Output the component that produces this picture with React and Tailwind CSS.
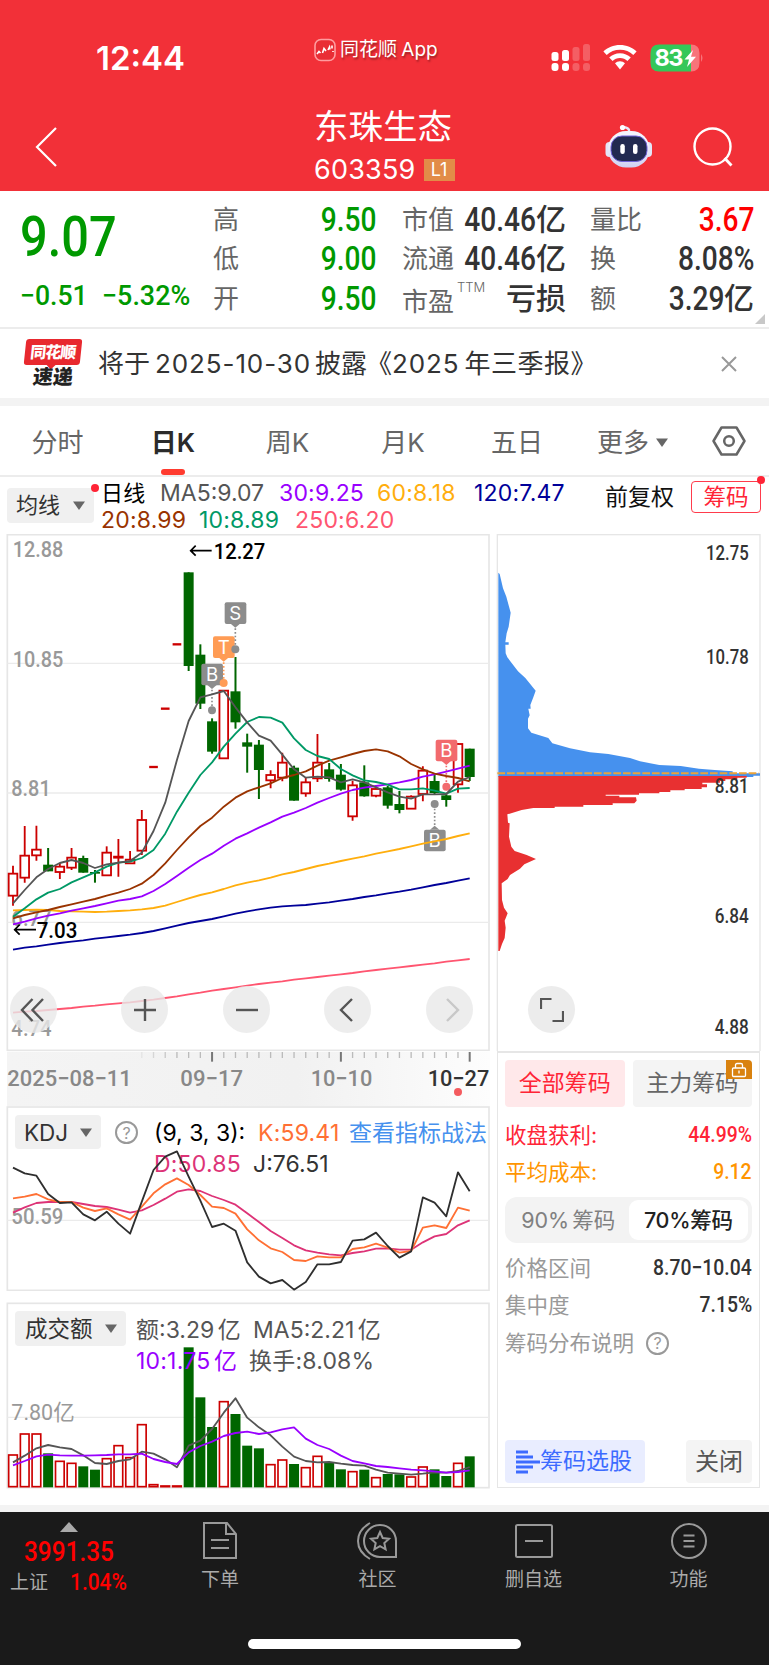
import React from 'react';
import clsx from 'clsx';

const NUM = "font-['Roboto','Noto_Sans_CJK_SC',sans-serif]";

// Candles: [up?, high, low, body top, body bottom] in chart units
const candles = [
  [1, 1007, 1127, 1031, 1097], [1, 888, 1058, 977, 1043], [1, 887, 992, 959, 976], [0, 954, 1024, 1004, 1024],
  [1, 1000, 1047, 1010, 1026], [1, 954, 1020, 983, 1013], [0, 977, 1028, 984, 1028], [0, 1020, 1058, 1026, 1031],
  [1, 949, 1036, 968, 1036], [1, 927, 1040, 980, 983], [1, 963, 1000, 989, 1000], [1, 840, 975, 870, 962],
  [1, 711, 711, 711, 711], [1, 536, 536, 536, 536], [1, 343, 343, 343, 343], [0, 127, 423, 127, 408],
  [0, 343, 537, 374, 521], [0, 565, 671, 574, 665], [1, 482, 685, 482, 685], [0, 381, 596, 484, 577],
  [0, 611, 728, 637, 650], [0, 630, 807, 644, 720], [1, 721, 775, 735, 751], [1, 668, 754, 698, 743],
  [0, 707, 812, 713, 812], [1, 743, 800, 757, 790], [1, 612, 756, 698, 745], [0, 699, 755, 718, 747],
  [0, 702, 782, 734, 779], [1, 752, 872, 766, 859], [0, 706, 800, 757, 799], [1, 766, 802, 777, 797],
  [0, 768, 836, 772, 827], [0, 783, 850, 822, 840], [1, 796, 836, 800, 836], [1, 709, 814, 722, 792],
  [0, 735, 795, 753, 789], [0, 790, 830, 796, 810], [1, 640, 788, 642, 763], [0, 656, 753, 656, 741],
];

const maLines = [
  { color: '#ff5570', data: [1448, 1445, 1443, 1440, 1437, 1434, 1430, 1427, 1423, 1420, 1417, 1413, 1409, 1404, 1399, 1393, 1388, 1382, 1377, 1372, 1367, 1362, 1358, 1354, 1349, 1345, 1341, 1337, 1333, 1329, 1324, 1320, 1316, 1312, 1308, 1304, 1300, 1295, 1291, 1287] },
  { color: '#000099', data: [1259, 1253, 1249, 1244, 1239, 1235, 1231, 1226, 1222, 1218, 1214, 1209, 1203, 1195, 1187, 1179, 1173, 1167, 1159, 1151, 1144, 1138, 1133, 1129, 1127, 1125, 1121, 1117, 1112, 1107, 1101, 1096, 1090, 1085, 1079, 1072, 1065, 1059, 1052, 1045] },
  { color: '#ffae0d', data: [1141, 1140, 1139, 1140, 1143, 1144, 1145, 1146, 1145, 1143, 1141, 1138, 1134, 1127, 1116, 1105, 1095, 1087, 1077, 1066, 1058, 1051, 1043, 1033, 1026, 1017, 1008, 1001, 993, 986, 979, 971, 964, 957, 949, 941, 934, 927, 918, 910] },
  { color: '#9900ff', data: [1183, 1175, 1165, 1157, 1150, 1142, 1135, 1128, 1120, 1112, 1107, 1099, 1083, 1062, 1038, 1013, 990, 971, 947, 926, 910, 893, 877, 860, 848, 834, 818, 804, 791, 780, 773, 768, 763, 757, 750, 740, 733, 725, 716, 707] },
  { color: '#993300', data: [1165, 1155, 1147, 1140, 1131, 1123, 1115, 1107, 1097, 1088, 1077, 1061, 1035, 1000, 960, 922, 888, 863, 830, 803, 784, 772, 760, 744, 735, 724, 707, 692, 682, 672, 663, 658, 664, 679, 702, 718, 731, 738, 744, 754] },
  { color: '#009966', data: [1160, 1135, 1108, 1088, 1077, 1057, 1042, 1027, 1010, 998, 995, 984, 960, 911, 845, 788, 735, 697, 650, 611, 576, 561, 563, 578, 625, 660, 678, 687, 717, 736, 751, 756, 764, 778, 778, 775, 782, 791, 776, 774] },
  { color: '#555555', data: [1120, 1080, 1042, 1017, 999, 990, 999, 1014, 1003, 998, 993, 968, 903, 818, 690, 573, 502, 493, 483, 532, 577, 617, 632, 674, 718, 743, 740, 742, 757, 748, 757, 772, 787, 800, 806, 793, 793, 792, 755, 741] },
];

const kdjLines = [
  { color: '#dd3377', data: [338, 322, 309, 306, 306, 306, 312, 318, 321, 329, 338, 331, 315, 296, 275, 268, 273, 288, 300, 314, 340, 366, 393, 414, 436, 451, 458, 463, 466, 459, 454, 446, 445, 449, 449, 427, 409, 402, 376, 361] },
  { color: '#ff7034', data: [295, 290, 282, 298, 306, 306, 323, 333, 325, 343, 359, 320, 280, 253, 235, 255, 285, 320, 324, 341, 388, 421, 445, 456, 480, 483, 469, 472, 472, 447, 442, 431, 443, 458, 453, 383, 376, 384, 323, 332] },
  { color: '#2f2f2f', data: [203, 220, 227, 282, 309, 307, 343, 361, 335, 371, 401, 305, 210, 170, 154, 230, 302, 381, 371, 392, 487, 530, 550, 540, 569, 546, 493, 493, 486, 422, 418, 398, 438, 473, 454, 292, 308, 349, 217, 274] },
];

const volumes = [463, 400, 400, 460, 482, 488, 499, 509, 474, 435, 471, 372, 552, 556, 556, 142, 292, 381, 303, 342, 437, 445, 492, 478, 492, 501, 467, 487, 508, 513, 509, 531, 522, 523, 529, 499, 508, 528, 488, 469];

const volumeLines = [
  { color: '#555555', data: [487, 467, 445, 435, 442, 447, 466, 489, 492, 483, 478, 455, 461, 478, 502, 437, 422, 387, 338, 295, 353, 382, 406, 440, 470, 483, 487, 486, 491, 495, 497, 509, 518, 521, 524, 521, 517, 518, 513, 501] },
  { color: '#9900ff', data: [496, 483, 469, 464, 466, 467, 467, 466, 465, 463, 463, 461, 477, 486, 492, 457, 438, 425, 408, 399, 395, 402, 397, 388, 382, 416, 435, 447, 467, 483, 490, 498, 501, 505, 509, 511, 514, 518, 516, 511] },
];

const xAt = (i) => 39 + i * 35.13;

function Line({ data, color }) {
  return <polyline points={data.map((y, i) => `${xAt(i)},${y}`).join(' ')} fill="none" stroke={color} strokeWidth="5.500" strokeLinejoin="round" />;
}

function AxisText({ x, y, w, size = 66, fill = '#999', weight = 500, children }) {
  return (
    <text x={x} y={y} textLength={w} lengthAdjust="spacingAndGlyphs" fontSize={size} fill={fill} fontWeight={weight} className={NUM}>
      {children}
    </text>
  );
}

function Flag({ x, y, dotY, color, label }) {
  const below = dotY > y;
  const edge = below ? y + 32 : y - 32;
  const dir = below ? 1 : -1;
  return (
    <g fill={color}>
      <rect x={x - 32} y={y - 32} width="65" height="65" rx="6" />
      <path d={`M${x - 14} ${edge}L${x} ${edge + dir * 12}L${x + 14} ${edge}Z`} />
      <path d={`M${x} ${edge + dir * 14}V${dotY}`} stroke={color} strokeWidth="5" strokeDasharray="5 6" />
      <circle cx={x} cy={dotY} r="12" />
      <text x={x} y={y + 20} textAnchor="middle" fontSize="56" fill="#fff" className="font-['Inter',sans-serif]">{label}</text>
    </g>
  );
}

function Caret({ className }) {
  return (
    <svg viewBox="0 0 12 9" className={clsx('w-3 h-[9px]', className)}>
      <path d="M0 0.5H12L6 9Z" fill="#666" />
    </svg>
  );
}

function Help() {
  return (
    <span className="flex size-[23px] shrink-0 items-center justify-center rounded-full border-2 border-[#999] text-[16px] leading-none text-[#999]">?</span>
  );
}

function StatusBar() {
  return (
    <div className="flex h-[88px] items-start text-white">
      <div className="ml-[96px] mt-[38px] w-[218px] text-[33px] font-semibold leading-10">12:44</div>
      <div className="mt-9 flex w-[237px] items-center">
        <svg viewBox="0 0 22 24" className="mr-1 h-6 w-[22px]">
          <rect x="1" y="1.5" width="20" height="21" rx="6" fill="#e92d35" stroke="#ff9c9f" strokeWidth="1.6" />
          <path d="M3 16L5 13.500L6.500 15M8.500 15L10 10.500L12 13M14 12L15.500 9L16 11.500M18 7.500V10.500M19 13V14" fill="none" stroke="#fff" strokeWidth="1.6" />
        </svg>
        <span className="text-[19px] leading-7 [text-shadow:1px_2px_2px_rgba(0,0,0,0.35)] [word-spacing:-1px]">同花顺 App</span>
      </div>
      <svg viewBox="0 0 40 28" className="mt-[43px] h-7 w-10">
        <g fill="#fff">
          <rect x="0.5" y="9" width="7" height="9" rx="2.5" />
          <rect x="11" y="7" width="7" height="11" rx="2.5" />
          <rect x="0.5" y="20" width="7" height="8" rx="3" />
          <rect x="11" y="20" width="7" height="8" rx="3" />
          <g opacity="0.22">
            <rect x="21.5" y="4" width="7" height="14" rx="2.5" />
            <rect x="32" y="1" width="7" height="17" rx="2.5" />
            <rect x="21.5" y="20" width="7" height="8" rx="3" />
            <rect x="32" y="20" width="7" height="8" rx="3" />
          </g>
        </g>
      </svg>
      <svg viewBox="0 0 34 25" className="ml-[12px] mt-[45px] h-[25px] w-[34px]">
        <path d="M17 0C10.500 0 4.600 2.500 0.400 6.500L3.700 10C7.200 6.700 11.900 4.800 17 4.800S26.800 6.700 30.300 10L33.600 6.500C29.400 2.500 23.500 0 17 0Z" fill="#fff" />
        <path d="M17 8.300C12.800 8.300 9 9.900 6.200 12.500L9.600 15.900C11.500 14.100 14.100 13 17 13S22.500 14.100 24.400 15.900L27.800 12.500C25 9.900 21.200 8.300 17 8.300Z" fill="#fff" />
        <path d="M17 16.300C15.100 16.300 13.300 17 12 18.300L17 24.500L22 18.300C20.700 17 18.900 16.300 17 16.300Z" fill="#fff" />
      </svg>
      <svg viewBox="0 0 54 28" className="ml-[13px] mt-[43.500px] h-7 w-[54px]">
        <path d="M9 0.500H41V27.500H9Q0.500 27.500 0.500 19V9Q0.500 0.500 9 0.500Z" fill="#34c759" />
        <path d="M41 0.500Q49.500 0.500 49.500 9V19Q49.500 27.500 41 27.500Z" fill="#f7747a" />
        <path d="M51 10Q54 14 51 18Z" fill="#f7747a" />
        <path d="M43 6L34.500 15.500H39L37 23L46 12.800H41Z" fill="#fff" />
        <text x="4.500" y="22" fontSize="23.500" fontWeight="700" fill="#fff" textLength="29" className="font-['Inter',sans-serif]">83</text>
      </svg>
    </div>
  );
}

function TitleBar() {
  return (
    <div className="flex h-[103px] items-start text-white">
      <svg viewBox="0 0 22 40" className="ml-[35px] mt-[39px] h-10 w-[22px]">
        <path d="M21 1L2 20L21 39" fill="none" stroke="#fff" strokeWidth="2.200" />
      </svg>
      <div className="ml-[257px] mt-[18px] w-[291px]">
        <div className="text-[34.500px] leading-[42px]">东珠生态</div>
        <div className="mt-[6px] flex items-center">
          <span className="text-[27px] leading-8 tracking-[0.2px]">603359</span>
          <span className="ml-[8px] flex h-[22px] w-[31px] items-center justify-center bg-[#e28c48] text-[18px] leading-none">L1</span>
        </div>
      </div>
      <svg viewBox="0 0 48 46" className="mt-[35px] h-[46px] w-12">
        <defs>
          <linearGradient id="shell" x1="0" y1="0" x2="0" y2="1">
            <stop offset="0.3" stopColor="#f3f4fd" />
            <stop offset="1" stopColor="#cfd0f2" />
          </linearGradient>
        </defs>
        <path d="M24 9V7Q23 4.500 18 4" fill="none" stroke="#e8e8f8" strokeWidth="2.400" />
        <circle cx="17.500" cy="4.500" r="2.600" fill="#fff" />
        <rect x="0.500" y="19" width="8" height="15" rx="4" fill="#e4e5f8" />
        <rect x="39" y="19" width="8" height="15" rx="4" fill="#e4e5f8" />
        <rect x="3" y="8" width="41.500" height="36.500" rx="18" fill="url(#shell)" />
        <rect x="6" y="13" width="36" height="25.500" rx="11" fill="#222a50" stroke="#6f62d8" strokeWidth="1" />
        <rect x="15.300" y="21" width="4.500" height="10" rx="2.200" fill="#fff" />
        <rect x="28" y="21" width="4.500" height="10" rx="2.200" fill="#fff" />
      </svg>
      <svg viewBox="0 0 42 42" className="ml-[39px] mt-[39px] size-[42px]">
        <circle cx="20.500" cy="19.500" r="18" fill="none" stroke="#fff" strokeWidth="2.400" />
        <path d="M32.500 31L39.500 38.500" stroke="#fff" strokeWidth="2.800" />
      </svg>
    </div>
  );
}

function Stat({ label, sup, value, unit, color, className }) {
  return (
    <div className={clsx('flex h-[39.500px] items-center justify-between whitespace-nowrap', className)}>
      <span className={clsx('relative w-0 text-[26px] leading-9 text-[#666]', sup && 'top-[3px]')}>
        {label}
        {sup && <span className="absolute -top-[5px] left-[55px] text-[13px] font-light leading-4">{sup}</span>}
      </span>
      <span className={clsx('flex items-center font-medium', color, NUM)}>
        {value && <span className="origin-right scale-x-[0.865] text-[32.500px] leading-9">{value}</span>}
        {unit && <span className="text-[30px] leading-9">{unit}</span>}
      </span>
    </div>
  );
}

function Quote() {
  return (
    <section className="relative flex h-[138px] border-b-2 border-[#ececec] bg-white pt-[9px]">
      <div className={clsx('w-[213px] pl-5 font-medium text-[#009900]', NUM)}>
        <div className="mt-[5px] origin-left scale-x-[0.87] text-[56px] leading-[64px]">9.07</div>
        <div className="mt-[9px] flex whitespace-pre text-[28px] leading-9">
          <span className="w-[82px] origin-left scale-x-[0.95]">−0.51</span>
          <span className="w-[90px] origin-left scale-x-[0.96]">−5.32%</span>
        </div>
      </div>
      <div className="w-[163px]">
        <Stat label="高" value="9.50" color="text-[#009900]" />
        <Stat label="低" value="9.00" color="text-[#009900]" />
        <Stat label="开" value="9.50" color="text-[#009900]" />
      </div>
      <div className="ml-[26px] w-[164px]">
        <Stat label="市值" value="40.46" unit="亿" color="text-[#333]" />
        <Stat label="流通" value="40.46" unit="亿" color="text-[#333]" />
        <Stat label="市盈" sup="TTM" unit="亏损" color="text-[#333]" />
      </div>
      <div className="ml-6 w-[164px]">
        <Stat label="量比" value="3.67" color="text-[#ff0000]" />
        <Stat label="换" value="8.08%" color="text-[#333]" />
        <Stat label="额" value="3.29" unit="亿" color="text-[#333]" />
      </div>
      <svg viewBox="0 0 10 10" className="absolute bottom-[3px] right-[4px] size-[10px]"><path d="M10 0V10H0Z" fill="#c8c8c8" /></svg>
    </section>
  );
}

function News() {
  return (
    <section className="flex h-[69px] items-center bg-white">
      <div className="ml-[23px] flex w-[60px] flex-col items-center">
        <div className="relative flex h-[26px] w-[56px] -skew-x-6 items-center justify-center rounded-[3px] bg-[#e8292f] text-[16px] font-black leading-none tracking-[-1px] text-white">
          同花顺
          <span className="absolute -bottom-[3px] left-6 size-[7px] rotate-45 bg-[#e8292f]" />
        </div>
        <div className="mt-px -skew-x-6 text-[20px] font-black leading-[22px] text-[#222]">速递</div>
      </div>
      <div className="ml-[15px] flex items-center text-[26px] leading-9 text-[#333]">
        <span>将于</span>
        <span className="ml-[5px] tracking-[0.9px]">2025-10-30</span>
        <span className="ml-1">披露</span>
        <span className="-ml-px">《</span>
        <span className="tracking-[0.9px]">2025</span>
        <span className="ml-[5px] tracking-[0.5px]">年三季报》</span>
      </div>
      <svg viewBox="0 0 16 16" className="ml-auto mr-8 size-4"><path d="M1 1L15 15M15 1L1 15" stroke="#999" strokeWidth="2" /></svg>
    </section>
  );
}

function Tabs() {
  const tabs = [
    { name: '分时', width: 'w-[115px]' },
    { name: '日K', width: 'w-[116px]', active: true },
    { name: '周K', width: 'w-[113px]' },
    { name: '月K', width: 'w-[118px]' },
    { name: '五日', width: 'w-[110px]' },
  ];
  return (
    <nav className="flex h-[71px] border-b-2 border-[#ececec] bg-white text-[26px] text-[#666]">
      {tabs.map((tab) => (
        <div key={tab.name} className={clsx('relative flex items-center justify-center pt-[3px]', tab.width, tab.active && 'font-semibold text-[#2b2b2b]')}>
          {tab.name}
          {tab.active && <span className="absolute bottom-0 h-[6px] w-6 rounded-[3px] bg-[#ff3b2f]" />}
        </div>
      ))}
      <div className="ml-[25px] flex items-center pt-[3px]">更多<Caret className="ml-[7px]" /></div>
      <svg viewBox="0 0 34 30" className="ml-[44px] mt-5 h-[30px] w-[34px]">
        <path d="M9.500 1.500H24.500L32.500 15L24.500 28.500H9.500L1.500 15Z" fill="none" stroke="#666" strokeWidth="2.500" strokeLinejoin="round" />
        <circle cx="17" cy="15" r="4.800" fill="none" stroke="#666" strokeWidth="2.500" />
      </svg>
    </nav>
  );
}

function Legend() {
  return (
    <div className="flex h-[57px] bg-white">
      <div className="relative ml-[7px] mt-[11px] flex h-[35px] w-[87px] items-center rounded bg-[#f0f0f0] pl-[9px] text-[22px] text-[#333]">
        均线<Caret className="ml-[13px]" />
        <span className="absolute -right-[5px] -top-1 size-2 rounded-full bg-[#ff2436]" />
      </div>
      <div className="ml-[7px] mt-[3px] w-[504px] text-[23px] leading-[27px] tracking-[0.2px]">
        <div className="flex whitespace-nowrap">
          <span className="w-[59px] text-[22px] text-black">日线</span>
          <span className="w-[119px] tracking-normal text-[#555]">MA5:9.07</span>
          <span className="w-[98px] text-[#9900ff]">30:9.25</span>
          <span className="w-[97px] text-[#ffae0d]">60:8.18</span>
          <span className="text-[#000099]">120:7.47</span>
        </div>
        <div className="flex whitespace-nowrap">
          <span className="w-[98px] text-[#993300]">20:8.99</span>
          <span className="w-[96px] text-[#009966]">10:8.89</span>
          <span className="text-[#ff5570]">250:6.20</span>
        </div>
      </div>
      <div className="mt-[4px] text-[23px] leading-8 text-[#111]">前复权</div>
      <div className="relative ml-[17px] mt-1 flex h-8 w-[70px] items-center justify-center rounded border-[1.500px] border-[#ff3b4c] text-[22.500px] text-[#ff2436]">
        筹码
        <span className="absolute -right-[5px] -top-[6px] size-2 rounded-full bg-[#ff2436]" />
      </div>
    </div>
  );
}

const controls = [
  { path: 'M15.500 5L5 16L15.500 27M26 5L15.500 16L26 27', left: 'left-[10px]' },
  { path: 'M17 5V27M6 16H28', left: 'left-[121px]' },
  { path: 'M6 16H28', left: 'left-[223px]' },
  { path: 'M21 5L10 16L21 27', left: 'left-[324px]' },
  { path: 'M14 5L25 16L14 27', left: 'left-[426px]', off: true },
];

function CandleChart() {
  return (
    <div className="relative h-[517px]">
      <svg viewBox="0 12 1470 1551" className="h-[517px] w-[490px]">
        <rect x="22" y="14" width="1445" height="1547" fill="#fff" stroke="#e6e6e6" strokeWidth="5" />
        {[400, 789, 1177].map((y) => <path key={y} d={`M22 ${y}H1467`} stroke="#ebebeb" strokeWidth="4" />)}
        <AxisText x="38" y="81" w="152">12.88</AxisText>
        <AxisText x="38" y="410" w="152">10.85</AxisText>
        <AxisText x="34" y="799" w="118">8.81</AxisText>
        <AxisText x="34" y="1187" w="121">6.77</AxisText>
        <AxisText x="34" y="1518" w="121">4.74</AxisText>
        {candles.map(([up, high, low, top, bottom], i) => {
          const x = xAt(i);
          if (high === low) return <path key={i} d={`M${x - 13} ${high}h26`} stroke="#cc0000" strokeWidth="7" />;
          return up ? (
            <g key={i} stroke="#cc0000" strokeWidth="5.500" fill="none">
              <path d={`M${x} ${high}V${top}M${x} ${bottom}V${low}`} />
              <rect x={x - 13} y={top} width="26" height={bottom - top} />
            </g>
          ) : (
            <g key={i} fill="#006600">
              <rect x={x - 3} y={high} width="6" height={low - high} />
              <rect x={x - 15} y={top} width="30" height={bottom - top} />
            </g>
          );
        })}
        <Flag x={636} y={433} dotY={541} color="#8c8c8c" label="B" />
        <Flag x={671} y={351} dotY={459} color="#ff9c55" label="T" />
        <Flag x={706} y={249} dotY={358} color="#8c8c8c" label="S" />
        <Flag x={1339} y={661} dotY={770} color="#f26a6d" label="B" />
        <Flag x={1304} y={931} dotY={822} color="#8c8c8c" label="B" />
        {maLines.map((l) => <Line key={l.color} {...l} />)}
        <path d="M635 62H572M587 47L572 62L587 77M108 1199H44M59 1184L44 1199L59 1214" fill="none" stroke="#000" strokeWidth="5" />
        <AxisText x="641" y="87" w="155" size={68} fill="#000">12.27</AxisText>
        <AxisText x="110" y="1223" w="122" size={66} fill="#000">7.03</AxisText>
      </svg>
      {controls.map((c) => (
        <button key={c.path} className={clsx('absolute top-[452px] flex size-[47px] items-center justify-center rounded-full bg-[#e8e8e8]/80', c.left)}>
          <svg viewBox="0 0 34 32" className="h-8 w-[34px]">
            <path d={c.path} fill="none" stroke={c.off ? '#c8c8c8' : '#555'} strokeWidth="2.400" />
          </svg>
        </button>
      ))}
    </div>
  );
}

function DateRuler() {
  return (
    <svg viewBox="0 363 1470 165" className="h-[55px] w-[490px]">
      <defs>
        <linearGradient id="ruler" x1="0" y1="0" x2="1" y2="0">
          <stop offset="0" stopColor="#f4f4f4" />
          <stop offset="0.6" stopColor="#f1f1f1" />
          <stop offset="1" stopColor="#fdfdfd" />
        </linearGradient>
      </defs>
      <rect x="21" y="365" width="1449" height="166" fill="url(#ruler)" />
      {Array.from({ length: 29 }, (_, k) => k + 11).map((i) => {
        const major = i === 17 || i === 28 || i === 39;
        return <path key={i} d={`M${xAt(i)} 366v${major ? 29 : 18}`} stroke={major ? '#777' : '#bbb'} strokeWidth={major ? 6 : 4} opacity={Math.min(1, (i - 10) / 4)} />;
      })}
      <AxisText x="22" y="468" w="373" fill="#888">2025−08−11</AxisText>
      <AxisText x="541" y="468" w="188" fill="#888">09−17</AxisText>
      <AxisText x="932" y="468" w="185" fill="#888">10−10</AxisText>
      <AxisText x="1283" y="468" w="185" fill="#333">10−27</AxisText>
      <circle cx="1374" cy="486" r="12" fill="#f45b5f" />
    </svg>
  );
}

function KdjChart() {
  return (
    <div className="relative h-[185px]">
      <svg viewBox="0 18 1470 555" className="h-[185px] w-[490px]">
        <rect x="22" y="21" width="1445" height="550" fill="#fff" stroke="#e6e6e6" strokeWidth="5" />
        <path d="M22 361H1467" stroke="#ebebeb" strokeWidth="4" />
        <AxisText x="34" y="372" w="156">50.59</AxisText>
      </svg>
      <div className="absolute left-[15px] top-[9px] flex text-[23px] leading-[31px]">
        <div className="flex h-[34px] w-[86px] items-center rounded bg-[#f0f0f0] pl-[9px] text-[22.500px] text-[#333]">KDJ<Caret className="ml-3" /></div>
        <div className="ml-[14px] mt-[6px]"><Help /></div>
        <div className="ml-[16px] mt-[3px]">
          <div className="flex whitespace-pre">
            <span className="w-[104px] text-black">(9, 3, 3):</span>
            <span className="w-[91px] tracking-[0.2px] text-[#ff7034]">K:59.41</span>
            <span className="text-[#4691ee]">查看指标战法</span>
          </div>
          <div className="flex">
            <span className="w-[99px] tracking-[0.2px] text-[#dd3377]">D:50.85</span>
            <span className="text-[#333]">J:76.51</span>
          </div>
        </div>
      </div>
      <svg viewBox="0 18 1470 555" className="absolute left-0 top-0 h-[185px] w-[490px]">
        {kdjLines.map((l) => <Line key={l.color} {...l} />)}
      </svg>
    </div>
  );
}

function VolumeChart() {
  return (
    <div className="relative mt-[11px] h-[187px]">
      <svg viewBox="0 6 1470 561" className="h-[187px] w-[490px]">
        <rect x="22" y="10" width="1445" height="553" fill="#fff" stroke="#e6e6e6" strokeWidth="5" />
        <path d="M22 352H1467" stroke="#ebebeb" strokeWidth="4" />
        {volumes.map((y, i) =>
          candles[i][0]
            ? <rect key={i} x={xAt(i) - 13} y={y + 2} width="26" height={558 - y} fill="none" stroke="#cc0000" strokeWidth="5" />
            : <rect key={i} x={xAt(i) - 15} y={y} width="30" height={562 - y} fill="#006600" />
        )}
        <AxisText x="34" y="361" w="190" weight={400}>7.80亿</AxisText>
        {volumeLines.map((l) => <Line key={l.color} {...l} />)}
      </svg>
      <div className="absolute left-[15px] top-[9px] flex text-[23px] leading-[31px]">
        <div className="flex h-[35px] w-[111px] items-center rounded bg-[#f0f0f0] pl-[10px] text-[22.500px] text-[#333]">成交额<Caret className="ml-3" /></div>
        <div className="ml-[10px] mt-[4px] text-[#555] [word-spacing:-3px]">
          <div className="flex whitespace-pre">
            <span className="w-[117px]">额:3.29 亿</span>
            <span>MA5:2.21 亿</span>
          </div>
          <div className="flex whitespace-pre">
            <span className="w-[113px] tracking-[0.2px] text-[#9900ff]">10:1.75 亿</span>
            <span className="tracking-[0.2px]">换手:8.08%</span>
          </div>
        </div>
      </div>
    </div>
  );
}

function ChipChart() {
  return (
    <div className="relative h-[517px]">
      <svg viewBox="0 12 837 1551" className="h-[517px] w-[279px]">
        <rect x="22" y="14" width="788" height="1600" fill="#fff" stroke="#e6e6e6" strokeWidth="4" />
        <path d="M25 128L29 132L39 175L49 200L62 248L56 290L50 310L46 337H56V344H46L47 370L52 382L84 424L106 444L137 482L130 502L121 525L122 536H115L119 556L114 566V595L124 608L175 624L187 640L240 655L300 667L355 672L420 684L450 694L508 705L572 708L627 716L674 720L728 724V730H810V737H790V741H25Z" fill="#4691ee" />
        <path d="M25 738H770V743H742V748H706V753H690V758H637V763H651V772H635V777H584V781H541V786H508V790H447V794H347V797H388V802H438L440 812L433 820H368V825H280V830H194V834H130L95 840L52 853L54 878L59 880L57 920L64 950L74 963L110 975L138 987L103 1003L90 1016L60 1035L53 1047L35 1060L36 1110L42 1133L53 1150L44 1172L47 1193L44 1224L36 1242L29 1263H25Z" fill="#e83031" />
        <path d="M22 730H806" stroke="#e9a23b" strokeWidth="6" strokeDasharray="23 6" />
        <AxisText x="648" y="89" w="128" size={58} fill="#333">12.75</AxisText>
        <AxisText x="648" y="402" w="128" size={58} fill="#333">10.78</AxisText>
        <AxisText x="674" y="789" w="102" size={58} fill="#333">8.81</AxisText>
        <AxisText x="674" y="1178" w="102" size={58} fill="#333">6.84</AxisText>
        <AxisText x="674" y="1513" w="102" size={58} fill="#333">4.88</AxisText>
      </svg>
      <button className="absolute left-[38px] top-[452px] flex size-[47px] items-center justify-center rounded-full bg-[#ececec]">
        <svg viewBox="0 0 24 24" className="size-6"><path d="M1 11V1H11.500M23 13V23H12.500" fill="none" stroke="#555" strokeWidth="2.200" /></svg>
      </button>
    </div>
  );
}

function ChipRow({ label, value, className, valueClass }) {
  return (
    <div className={clsx('flex h-[37.500px] items-center justify-between text-[21.500px]', className)}>
      <span>{label}</span>
      <span className={clsx('origin-right scale-x-[0.86] text-[22.500px] font-medium', NUM, valueClass)}>{value}</span>
    </div>
  );
}

function ChipPanel() {
  return (
    <div className="ml-[7px] flex h-[437px] w-[263px] flex-col border border-t-2 border-[#e6e6e6] bg-white px-[7px] pt-[7px]">
      <div className="flex gap-2 text-[23px]">
        <div className="flex h-[47px] w-[120px] items-center justify-center rounded bg-[#ffe8ea] text-[#ff2436]">全部筹码</div>
        <div className="relative flex h-[47px] w-[120px] items-center justify-center rounded bg-[#f4f4f4] text-[#666]">
          主力筹码
          <span className="absolute right-0 top-0 flex h-[19px] w-[26px] items-center justify-center rounded-tr bg-[#d9820f]">
            <svg viewBox="0 0 16 16" className="size-4">
              <rect x="1.500" y="6" width="13" height="8.500" rx="1" fill="none" stroke="#fff" strokeWidth="1.300" />
              <path d="M4.500 6V3Q4.500 1.500 6 1.500H10Q11.500 1.500 11.500 3V6M8 8.500V11.500" fill="none" stroke="#fff" strokeWidth="1.300" />
            </svg>
          </span>
        </div>
      </div>
      <ChipRow label="收盘获利:" value="44.99%" className="mt-[9px] text-[#ff2436]" />
      <ChipRow label="平均成本:" value="9.12" className="text-[#ff9500]" />
      <div className="mt-[6px] flex h-[46px] rounded-xl bg-[#f3f3f3] p-[3px] pr-1 text-[21.500px]">
        <div className="flex w-[121px] items-center justify-center whitespace-pre text-[#808080] [word-spacing:-3px]">90% 筹码</div>
        <div className="flex h-10 w-[120px] items-center justify-center rounded-[9px] bg-white font-medium tracking-[-0.3px] text-[#222]">70%筹码</div>
      </div>
      <ChipRow label="价格区间" value="8.70−10.04" className="mt-[6px] text-[#999]" valueClass="text-[#333]" />
      <ChipRow label="集中度" value="7.15%" className="text-[#999]" valueClass="text-[#333]" />
      <div className="flex h-[38px] items-center gap-3 text-[21.500px] text-[#999]">筹码分布说明<Help /></div>
      <div className="mb-1 mt-auto flex justify-between">
        <div className="flex h-[43px] w-[140px] items-center rounded bg-[#e9edff] pl-[11px] text-[23px] text-[#3d6bff]">
          <svg viewBox="0 0 24 24" className="size-6">
            <path d="M0 2H12M0 7H17M0 12H24M0 17H17M0 22H12" stroke="#3d6bff" strokeWidth="3" />
          </svg>
          筹码选股
        </div>
        <div className="flex h-[43px] w-[66px] items-center justify-center rounded bg-[#f4f4f4] text-[24px] text-[#555]">关闭</div>
      </div>
    </div>
  );
}

const navItems = [
  {
    label: '下单', width: 'w-[146px]',
    icon: <><path d="M4 2H27L36 13V37H4Z" /><path d="M26 2V13H36M11 19H29M11 27H29" /></>,
  },
  {
    label: '社区', width: 'w-[169px]',
    icon: <><path d="M22 4A16 16 0 0 0 22 36H38V20A16 16 0 0 0 22 4Z" /><path d="M12 2Q0 9 0 20T12 38" /><path d="M22 11L24.700 17L31 17.700L26.300 22L27.600 28.300L22 25.200L16.400 28.300L17.700 22L13 17.700L19.300 17Z" /></>,
  },
  {
    label: '删自选', width: 'w-[143px]',
    icon: <><rect x="2" y="4" width="36" height="32" rx="1.500" /><path d="M11 20H29" /></>,
  },
  {
    label: '功能', width: 'w-[167px]',
    icon: <><circle cx="20" cy="20" r="17" /><path d="M14.500 14.500H25.500M14.500 20H25.500M14.500 25.500H25.500" /></>,
  },
];

function BottomNav() {
  return (
    <footer className="h-[153px] bg-[#1a1a1a] text-[#aaa]">
      <div className="flex h-[127px]">
        <div className="w-[147px] shrink-0">
          <svg viewBox="0 0 18 10" className="ml-[60px] mt-[10px] h-[10px] w-[18px]"><path d="M9 0L18 10H0Z" fill="#aaa" /></svg>
          <div className={clsx('ml-6 mt-[2px] w-[120px] origin-left scale-x-[0.87] text-[28px] font-medium leading-9 text-[#ff0000]', NUM)}>3991.35</div>
          <div className="-mt-px flex items-center leading-7">
            <span className="ml-[10px] w-[60px] text-[19px]">上证</span>
            <span className={clsx('origin-left scale-x-[0.91] text-[23px] font-medium text-[#ff0000]', NUM)}>1.04%</span>
          </div>
        </div>
        {navItems.map((item) => (
          <div key={item.label} className={clsx('flex shrink-0 flex-col items-center pt-[9px]', item.width)}>
            <svg viewBox="-1 0 42 40" className="h-10 w-[42px] fill-none stroke-[#999] stroke-2">{item.icon}</svg>
            <span className="mt-[5px] text-[19px] leading-7">{item.label}</span>
          </div>
        ))}
      </div>
      <div className="mx-auto h-[10px] w-[273px] rounded-full bg-white" />
    </footer>
  );
}

export default function App() {
  return (
    <div className="h-[1665px] w-[769px] overflow-hidden bg-white font-['Inter','Noto_Sans_CJK_SC',sans-serif]">
      <header className="bg-[#f23038]">
        <StatusBar />
        <TitleBar />
      </header>
      <Quote />
      <News />
      <div className="h-2 bg-[#f3f3f3]" />
      <Tabs />
      <Legend />
      <main className="flex">
        <div className="flex w-[490px] flex-col">
          <CandleChart />
          <DateRuler />
          <KdjChart />
          <VolumeChart />
        </div>
        <div className="w-[279px]">
          <ChipChart />
          <ChipPanel />
        </div>
      </main>
      <div className="mt-4 h-[7px] bg-[#f3f3f3]" />
      <BottomNav />
    </div>
  );
}
